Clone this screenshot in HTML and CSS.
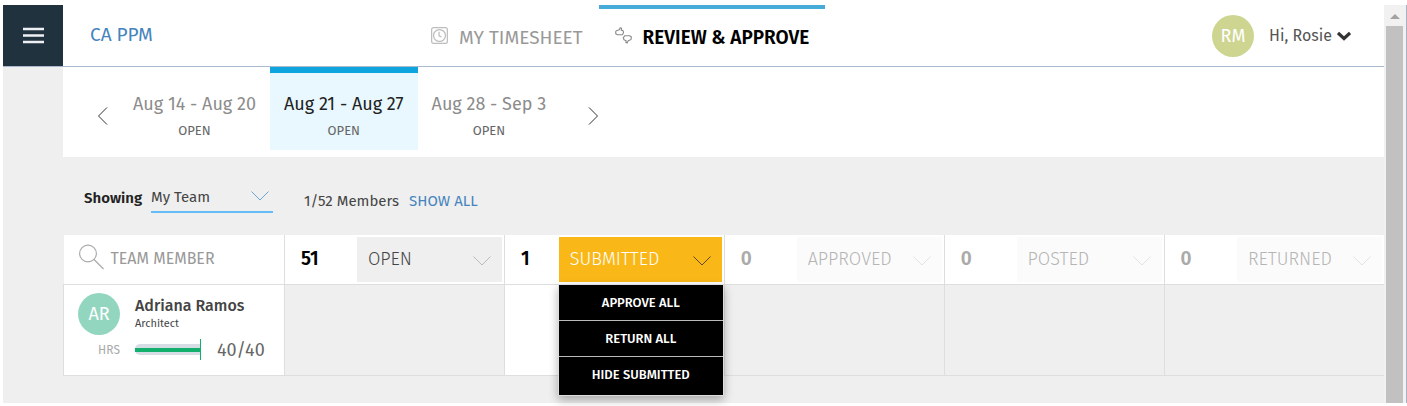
FILE: index.html
```html
<!DOCTYPE html>
<html lang="en">
<head>
  <meta charset="UTF-8" />
  <title>CA PPM - Review &amp; Approve</title>
  <link rel="stylesheet" href="styles.css">
</head>
<body>

  <div class="app">
    <header class="topbar">
      <button class="menu-button" type="button" aria-label="Menu">
        <svg width="21" height="17" viewBox="0 0 21 17"><path d="M0 2h21M0 8.500h21M0 15h21" stroke="#eef1f3" stroke-width="2.400" /></svg>
      </button>
      <a class="brand" href="#">CA PPM</a>
      <nav class="tabs">
        <a class="tab" href="#">
          <svg width="17" height="17" viewBox="0 0 18 18" fill="none" stroke="#bdbdbd" stroke-width="1.300">
            <rect x="0.700" y="0.700" width="16.600" height="16.600" rx="2" />
            <circle cx="9" cy="9" r="6.300" />
            <path d="M8.500 5v4.300l2.500 1.200" />
          </svg>
          MY TIMESHEET
        </a>
        <a class="tab active" href="#">
          <svg width="17" height="17" viewBox="0 0 18 18" fill="none" stroke="#8a8a8a" stroke-width="1.200" stroke-linejoin="round">
            <path d="M1.500 4 4.500 3 5.500 0.800 7 1.300 6.600 3.300 8.600 4 9 6 7.800 8.200H2.500L0.800 7.200V4.700z" />
            <path d="M16.500 13.500 14 14.500 12.800 17 11.500 16.500 11.800 14.500 9.500 13.500 8.800 11.500 10.200 9.300H15.500L17.200 10.300V12.700z" />
          </svg>
          REVIEW &amp; APPROVE
        </a>
      </nav>
      <button class="user" type="button">
        <span class="avatar user-avatar">RM</span>
        <span>Hi, Rosie</span>
        <svg width="14" height="10" viewBox="0 0 14 10"><path d="M1 2l6 5.500L13 2" fill="none" stroke="#333" stroke-width="3.200" /></svg>
      </button>
    </header>

    <main class="content">
      <div class="weeks">
        <button class="arrow" type="button" aria-label="Previous">
          <svg width="11" height="18" viewBox="0 0 11 18"><path d="M10 0.500 1.500 9 10 17.500" fill="none" stroke="#333" /></svg>
        </button>
        <button class="week" type="button">Aug 14 - Aug 20<small>OPEN</small></button>
        <button class="week current" type="button">Aug 21 - Aug 27<small>OPEN</small></button>
        <button class="week" type="button">Aug 28 - Sep 3<small>OPEN</small></button>
        <button class="arrow next" type="button" aria-label="Next">
          <svg width="11" height="18" viewBox="0 0 11 18"><path d="M1 0.500 9.500 9 1 17.500" fill="none" stroke="#333" /></svg>
        </button>
      </div>

      <div class="filters">
        <label for="team">Showing</label>
        <div class="select">
          <select id="team">
            <option>My Team</option>
          </select>
          <svg class="chevron" width="18" height="10" viewBox="0 0 18 10"><path d="M0.500 0.500 9 9 17.500 0.500" /></svg>
        </div>
        <span class="members">1/52 Members</span>
        <a class="show-all" href="#">SHOW ALL</a>
      </div>

      <table class="board">
        <thead>
          <tr>
            <th class="member-col">
              <div class="member-head">
                <svg width="25" height="26" viewBox="0 0 25 26" fill="none" stroke="#aaa" stroke-width="1.200"><circle cx="9" cy="9.500" r="8.400" /><path d="M15 15.500 24.500 25" /></svg>
                TEAM MEMBER
              </div>
            </th>
            <th>
              <div class="status">
                <span class="count">51</span>
                <button class="status-button" type="button">OPEN
                  <svg class="chevron" width="18" height="10" viewBox="0 0 18 10"><path d="M0.500 0.500 9 9 17.500 0.500" /></svg>
                </button>
              </div>
            </th>
            <th>
              <div class="status submitted">
                <span class="count">1</span>
                <button class="status-button" type="button">SUBMITTED
                  <svg class="chevron" width="18" height="10" viewBox="0 0 18 10"><path d="M0.500 0.500 9 9 17.500 0.500" /></svg>
                </button>
                <div class="menu">
                  <button type="button">APPROVE ALL</button>
                  <button type="button">RETURN ALL</button>
                  <button type="button">HIDE SUBMITTED</button>
                </div>
              </div>
            </th>
            <th>
              <div class="status empty">
                <span class="count">0</span>
                <button class="status-button" type="button">APPROVED
                  <svg class="chevron" width="18" height="10" viewBox="0 0 18 10"><path d="M0.500 0.500 9 9 17.500 0.500" /></svg>
                </button>
              </div>
            </th>
            <th>
              <div class="status empty">
                <span class="count">0</span>
                <button class="status-button" type="button">POSTED
                  <svg class="chevron" width="18" height="10" viewBox="0 0 18 10"><path d="M0.500 0.500 9 9 17.500 0.500" /></svg>
                </button>
              </div>
            </th>
            <th>
              <div class="status empty">
                <span class="count">0</span>
                <button class="status-button" type="button">RETURNED
                  <svg class="chevron" width="18" height="10" viewBox="0 0 18 10"><path d="M0.500 0.500 9 9 17.500 0.500" /></svg>
                </button>
              </div>
            </th>
          </tr>
        </thead>
        <tbody>
          <tr>
            <td class="filled">
              <div class="member">
                <span class="avatar member-avatar">AR</span>
                <div class="person">
                  <div class="name">Adriana Ramos</div>
                  <div class="role">Architect</div>
                </div>
                <span class="hrs">HRS</span>
                <div class="hours">
                  <div class="bar">
                    <div class="track"><div class="fill"></div></div>
                  </div>
                  <span>40/40</span>
                </div>
              </div>
            </td>
            <td></td>
            <td class="filled"></td>
            <td></td>
            <td></td>
            <td></td>
          </tr>
        </tbody>
      </table>
    </main>
  </div>

  <div class="scrollbar">
    <svg width="10" height="5" viewBox="0 0 10 5"><path d="M0 5 5 0l5 5z" fill="#a3a3a3" /></svg>
    <div class="thumb"></div>
  </div>

</body>
</html>
```
FILE: styles.css
```css
* {
  box-sizing: border-box;
}
body {
  margin: 0;
  padding: 5px 0 3px 3px;
  min-height: 100vh;
  display: flex;
  background: white;
  color: #444;
  font-family: "Fira Sans", "Noto Sans", sans-serif;
  font-size: 15px;
  line-height: 20px;
}
a {
  color: #4584bd;
  text-decoration: none;
}
button, select {
  font: inherit;
  color: inherit;
  border: none;
  background: none;
  padding: 0;
  cursor: pointer;
}
svg {
  display: block;
  flex: none;
}
.app {
  flex: 1;
  min-width: 0;
  display: flex;
  flex-direction: column;
  background: #efefef;
}

/* top bar */
.topbar {
  display: flex;
  height: 62px;
  background: white;
  border-bottom: 1px solid #a9bacf;
}
.menu-button {
  width: 60px;
  display: flex;
  align-items: center;
  justify-content: center;
  background: #20323e;
}
.brand {
  width: 352px;
  padding-left: 27px;
  font-size: 19px;
  line-height: 60px;
}
.tabs {
  display: flex;
}
.tab {
  display: flex;
  align-items: center;
  gap: 11px;
  padding: 0 16px;
  border-top: 4px solid transparent;
  color: #999;
  font-size: 19px;
}
.tab svg {
  margin-bottom: 4px;
}
.tab.active {
  border-color: #48acd8;
  color: black;
  font-weight: 600;
}
.user {
  display: flex;
  align-items: center;
  gap: 5px;
  margin-left: auto;
  padding-right: 33px;
  color: #555;
  font-size: 16px;
}
.avatar {
  width: 42px;
  height: 42px;
  border-radius: 50%;
  color: white;
  font-size: 18px;
  line-height: 42px;
  text-align: center;
}
.user-avatar {
  margin-right: 10px;
  background: #ced591;
}
.member-avatar {
  background: #92d6c0;
}

.content {
  margin-left: 60px;
}

/* week picker */
.weeks {
  display: flex;
  height: 90px;
  padding: 0 24px 7px;
  background: white;
}
.arrow {
  width: 32px;
  padding: 15px 0 0 10px;
}
.arrow.next {
  margin-left: 18px;
}
.week {
  padding: 12px 14px 0;
  border-top: 6px solid transparent;
  color: #8c8c8c;
  font-size: 18px;
}
.week small {
  display: block;
  margin-top: 7px;
  color: #666;
  font-size: 13px;
}
.week.current {
  border-color: #0ea5df;
  background: #e8f8fe;
  color: #222;
}

/* filters */
.filters {
  display: flex;
  align-items: center;
  height: 78px;
  padding: 4px 21px 0;
}
.filters label {
  width: 67px;
  color: #222;
  font-weight: 600;
}
.select {
  position: relative;
  width: 122px;
  border-bottom: 2px solid #66bdf5;
}
.select select {
  display: block;
  width: 100%;
  height: 28px;
  appearance: none;
}
.chevron path {
  fill: none;
  stroke: currentColor;
}
.select .chevron {
  position: absolute;
  top: 8px;
  right: 4px;
  color: #6ba8d6;
  pointer-events: none;
}
.members {
  margin: 0 10px 0 31px;
}
.members, .show-all {
  padding-top: 6px;
}

/* board */
.board {
  width: 100%;
  border-collapse: collapse;
  table-layout: fixed;
}
.board th, .board td {
  padding: 0;
  border: 1px solid #dedede;
}
.board th {
  height: 49px;
  border-top: none;
  background: white;
  font-weight: 300;
}
.board th:first-child {
  border-left: none;
}
.board th:last-child, .board td:last-child {
  border-right: none;
}
.board td {
  height: 91px;
  vertical-align: top;
}
.board td.filled {
  background: white;
}
.board .member-col {
  width: 221px;
  font-weight: 400;
}
.member-head {
  display: flex;
  align-items: center;
  gap: 7px;
  padding-left: 15px;
  color: #999;
  font-size: 16px;
}
.member-head svg {
  margin-bottom: 5px;
}
.status {
  position: relative;
  display: flex;
  align-items: center;
  justify-content: space-between;
  padding: 0 2px 0 16px;
}
.count {
  color: black;
  font-size: 19px;
  font-weight: 600;
}
.status-button {
  display: flex;
  align-items: center;
  justify-content: space-between;
  width: 145px;
  height: 45px;
  padding: 0 11px;
  background: #efefef;
  color: #444;
  font-size: 18px;
}
.status-button .chevron {
  margin-top: 3px;
  color: #bbb;
}
.status.submitted .status-button {
  width: 163px;
  background: #fab818;
  color: white;
}
.status.submitted .chevron {
  color: #5f4a15;
}
.status.empty .count {
  color: #aaa;
}
.status.empty .status-button {
  background: #fbfbfb;
  color: #b5b5b5;
}
.status.empty .chevron {
  color: #e3e3e3;
}
.menu {
  position: absolute;
  top: 47px;
  right: 0;
  width: 166px;
  border: 1px solid #ddd;
  background: #bbb;
  display: flex;
  flex-direction: column;
  gap: 1px;
  box-shadow: 0 4px 9px rgba(0,0,0,0.3);
}
.menu button {
  height: 35px;
  padding-top: 2px;
  background: black;
  color: white;
  font-size: 13px;
  font-weight: 500;
}
.menu button:last-child {
  height: 38px;
  padding-bottom: 3px;
}

/* member card */
.member {
  display: grid;
  grid-template-columns: 42px 1fr;
  column-gap: 15px;
  padding: 8px 14px 0;
}
.person {
  padding-top: 2px;
}
.name {
  font-size: 16px;
  font-weight: 500;
  line-height: 22px;
}
.role {
  font-size: 11px;
  line-height: 14px;
}
.hrs {
  color: #aaa;
  font-size: 12px;
  line-height: 30px;
  text-align: right;
}
.hours {
  display: flex;
  align-items: center;
  gap: 16px;
  color: #666;
  font-size: 18px;
}
.bar {
  display: flex;
  align-items: center;
  width: 66px;
  height: 21px;
  border-right: 1px solid #12b06c;
}
.track {
  flex: 1;
  height: 11px;
  padding-top: 4px;
  border-radius: 5px 0 0 5px;
  background: #d6dde5;
}
.fill {
  height: 4px;
  background: #12b06c;
}

/* page scrollbar */
.scrollbar {
  display: flex;
  flex-direction: column;
  width: 23px;
  padding: 9px 3px 0 2px;
  border-right: 1px solid #a9b0be;
  background: #f1f1f1;
}
.scrollbar svg {
  margin: 0 auto 7px 4px;
}
.thumb {
  flex: 1;
  background: #c1c1c1;
}
```
